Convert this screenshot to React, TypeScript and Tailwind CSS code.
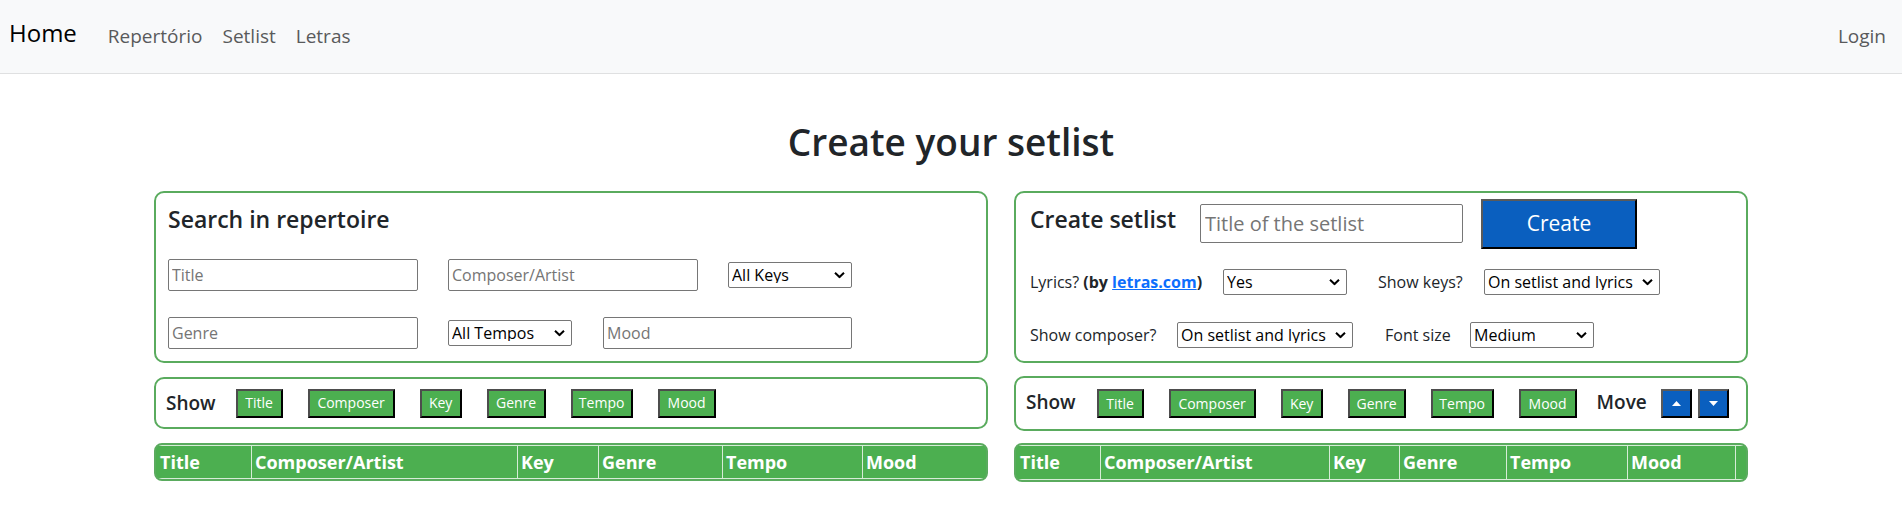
import React from 'react';

const font = "font-['Open_Sans',sans-serif]";

function Chevron() {
  return (
    <svg width="11" height="7" viewBox="0 0 11 7" className="pointer-events-none absolute right-[7px] top-1/2 -translate-y-1/2">
      <path d="M1 1.2l4.5 4.3 4.5-4.3" fill="none" stroke="#000" strokeWidth="2" />
    </svg>
  );
}

function Select({ value, w }: { value: string; w: string }) {
  return (
    <div className={`relative h-[26px] ${w}`}>
      <select
        defaultValue={value}
        className="appearance-none w-full h-full bg-white border border-[#767676] rounded-[2px] pl-[3px] text-[16px] text-black leading-none"
      >
        <option>{value}</option>
      </select>
      <Chevron />
    </div>
  );
}

function Input({ placeholder, w }: { placeholder: string; w: string }) {
  return (
    <input
      placeholder={placeholder}
      className={`h-[32px] ${w} bg-white border border-[#767676] rounded-[2px] px-[3px] text-[16px] placeholder:text-[#757575]`}
    />
  );
}

const greenBtn =
  'h-[29px] bg-[#4caf50] text-white text-[14px] leading-none border-2 border-t-[#4d4d4d] border-l-[#4d4d4d] border-r-black border-b-black flex items-center justify-center';

const blueBorder = 'border-2 border-t-[#5a5a5a] border-l-[#5a5a5a] border-r-black border-b-black';

export default function App() {
  const leftBtns = [
    { label: 'Title', w: 'w-[47px]' },
    { label: 'Composer', w: 'w-[87px]' },
    { label: 'Key', w: 'w-[42px]' },
    { label: 'Genre', w: 'w-[59px]' },
    { label: 'Tempo', w: 'w-[62px]' },
    { label: 'Mood', w: 'w-[58px]' },
  ];
  const rightBtns = [
    { label: 'Title', w: 'w-[47px]' },
    { label: 'Composer', w: 'w-[87px]' },
    { label: 'Key', w: 'w-[42px]' },
    { label: 'Genre', w: 'w-[58px]' },
    { label: 'Tempo', w: 'w-[63px]' },
    { label: 'Mood', w: 'w-[58px]' },
  ];
  const leftCols = [
    { label: 'Title', w: 'w-[95px]' },
    { label: 'Composer/Artist', w: 'w-[266px]' },
    { label: 'Key', w: 'w-[81px]' },
    { label: 'Genre', w: 'w-[124px]' },
    { label: 'Tempo', w: 'w-[140px]' },
    { label: 'Mood', w: 'flex-1' },
  ];
  const rightCols = [
    { label: 'Title', w: 'w-[84px]' },
    { label: 'Composer/Artist', w: 'w-[229px]' },
    { label: 'Key', w: 'w-[70px]' },
    { label: 'Genre', w: 'w-[107px]' },
    { label: 'Tempo', w: 'w-[121px]' },
    { label: 'Mood', w: 'w-[108px]' },
    { label: '', w: 'flex-1' },
  ];

  return (
    <div className={`${font} w-[1902px] h-[531px] bg-white text-[#212529]`}>
      {/* Navbar */}
      <nav className="h-[74px] bg-[#f8f9fa] border-b border-[#dfe0e1] flex items-center pl-[9px] pr-[16px]">
        <span className="text-[24px] text-black -mt-[7px] mr-[31px]">Home</span>
        <div className="flex items-center gap-[20px] text-[19px] text-[#595a5b]">
          <span>Repertório</span>
          <span>Setlist</span>
          <span>Letras</span>
        </div>
        <span className="ml-auto text-[19px] text-[#595a5b]">Login</span>
      </nav>

      <h1 className="text-center text-[37px] font-semibold leading-[46px] mt-[45px]">Create your setlist</h1>

      {/* Top panels */}
      <div className="flex justify-center gap-[26px] mt-[26px]">
        <div className="w-[834px] h-[172px] border-2 border-[#5aab5e] rounded-[10px] pl-[12px] pt-[12px]">
          <h2 className="text-[23px] font-semibold leading-[29px]">Search in repertoire</h2>
          <div className="flex items-center gap-[30px] mt-[25px]">
            <Input placeholder="Title" w="w-[250px]" />
            <Input placeholder="Composer/Artist" w="w-[250px]" />
            <Select value="All Keys" w="w-[124px]" />
          </div>
          <div className="flex items-center mt-[26px]">
            <Input placeholder="Genre" w="w-[250px]" />
            <div className="ml-[30px]">
              <Select value="All Tempos" w="w-[124px]" />
            </div>
            <div className="ml-[31px]">
              <Input placeholder="Mood" w="w-[249px]" />
            </div>
          </div>
        </div>

        <div className="w-[734px] h-[172px] border-2 border-[#5aab5e] rounded-[10px] pl-[14px] pt-[6px]">
          <div className="flex items-start">
            <h2 className="text-[23px] font-semibold leading-[29px] mt-[6px] w-[170px]">Create setlist</h2>
            <input
              placeholder="Title of the setlist"
              className="mt-[5px] h-[39px] w-[263px] bg-white border border-[#767676] rounded-[2px] px-[4px] text-[20px] placeholder:text-[#757575]"
            />
            <button className={`ml-[18px] h-[50px] w-[156px] bg-[#0a5fbf] text-white text-[21px] ${blueBorder}`}>
              Create
            </button>
          </div>
          <div className="flex items-center mt-[20px] text-[16px]">
            <span className="w-[193px]">
              Lyrics? <b>(by <a className="text-[#0d6efd] underline">letras.com</a>)</b>
            </span>
            <Select value="Yes" w="w-[124px]" />
            <span className="ml-[31px] w-[106px]">Show keys?</span>
            <Select value="On setlist and lyrics" w="w-[176px]" />
          </div>
          <div className="flex items-center mt-[27px] text-[16px]">
            <span className="w-[147px]">Show composer?</span>
            <Select value="On setlist and lyrics" w="w-[176px]" />
            <span className="ml-[32px] w-[85px]">Font size</span>
            <Select value="Medium" w="w-[124px]" />
          </div>
        </div>
      </div>

      {/* Show panels */}
      <div className="flex justify-center items-start gap-[26px] mt-[13px]">
        <div className="w-[834px] h-[52px] mt-[1px] border-2 border-[#5aab5e] rounded-[10px] pl-[10px] flex items-center">
          <span className="text-[19px] font-semibold mr-[20px]">Show</span>
          <div className="flex gap-[25px]">
            {leftBtns.map((b) => (
              <button key={b.label} className={`${greenBtn} ${b.w}`}>{b.label}</button>
            ))}
          </div>
        </div>
        <div className="w-[734px] h-[55px] border-2 border-[#5aab5e] rounded-[10px] pl-[10px] flex items-center">
          <span className="text-[19px] font-semibold mr-[21px] -mt-[2px]">Show</span>
          <div className="flex gap-[25px]">
            {rightBtns.map((b) => (
              <button key={b.label} className={`${greenBtn} ${b.w}`}>{b.label}</button>
            ))}
          </div>
          <span className="text-[19px] font-semibold ml-[20px] -mt-[2px]">Move</span>
          <button className={`ml-[14px] h-[29px] w-[31px] bg-[#0a5fbf] flex items-center justify-center ${blueBorder}`}>
            <svg width="9" height="5" viewBox="0 0 9 5"><path d="M0 5L4.5 0 9 5z" fill="#fff" /></svg>
          </button>
          <button className={`ml-[6px] h-[29px] w-[31px] bg-[#0a5fbf] flex items-center justify-center ${blueBorder}`}>
            <svg width="9" height="5" viewBox="0 0 9 5"><path d="M0 0L4.5 5 9 0z" fill="#fff" /></svg>
          </button>
        </div>
      </div>

      {/* Table headers */}
      <div className="flex justify-center gap-[26px] mt-[12px]">
        <div className="w-[834px] h-[38px] border-2 border-[#5aab5e] rounded-[8px] bg-[#4caf50] flex overflow-hidden">
          {leftCols.map((c, i) => (
            <div
              key={c.label}
              className={`${c.w} h-full flex items-center text-white text-[18px] font-bold border-t border-b border-[#d6ecd7] ${i === 0 ? 'pl-[4px]' : 'pl-[3px] border-l'}`}
            >
              {c.label}
            </div>
          ))}
        </div>
        <div className="w-[734px] h-[39px] border-2 border-[#5aab5e] rounded-[8px] bg-[#4caf50] flex overflow-hidden">
          {rightCols.map((c, i) => (
            <div
              key={c.label + i}
              className={`${c.w} h-full flex items-center text-white text-[18px] font-bold border-t border-b border-[#d6ecd7] ${i === 0 ? 'pl-[4px]' : 'pl-[3px] border-l'}`}
            >
              {c.label}
            </div>
          ))}
        </div>
      </div>
    </div>
  );
}
